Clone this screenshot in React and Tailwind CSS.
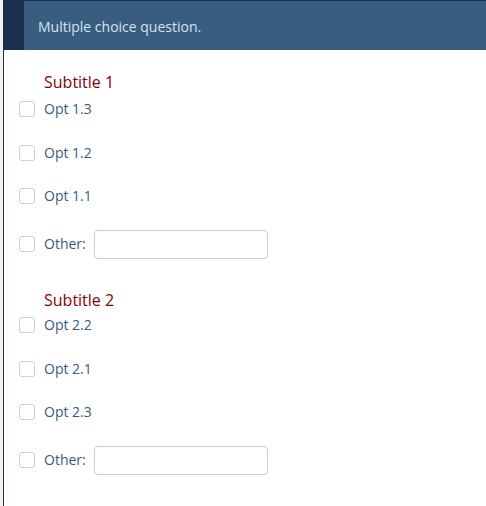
import React from "react";

function Box() {
  return <span className="block w-[16px] h-[16px] shrink-0 rounded-[3px] border border-[#cfcfcf] bg-white" />;
}

function Opt({ label, mt }) {
  return (
    <div className={`flex items-center h-[20px] ${mt}`}>
      <Box />
      <span className="ml-[9px] text-[14px] leading-[20px] text-[#365a80]">{label}</span>
    </div>
  );
}

function Other() {
  return (
    <div className="flex items-center h-[29px] mt-[23.5px]">
      <Box />
      <span className="ml-[9px] text-[14px] leading-[20px] text-[#365a80]">Other:</span>
      <input type="text" className="ml-[8px] w-[174px] h-[29px] rounded-[4px] border border-[#cccccc] bg-white outline-none" />
    </div>
  );
}

export default function App() {
  return (
    <div className="min-h-screen bg-[#f2f2f2] pl-[3px]" style={{ fontFamily: '"Open Sans", "Noto Sans", sans-serif' }}>
      <div className="min-h-screen bg-white border-l border-t border-[#1b2f4f]">
        <div className="flex h-[49px]">
          <div className="w-[20px] bg-[#1a2f50]" />
          <div className="flex-1 bg-[#385d80] flex items-center pl-[14px] pt-[1px] text-[14px] text-[#d6e2ee]">
            Multiple choice question.
          </div>
        </div>
        <div className="pl-[15px]">
          <div className="mt-[21px] pl-[25px] text-[16px] leading-[22px] text-[#860000]">Subtitle 1</div>
          <Opt label="Opt 1.3" mt="mt-[6px]" />
          <Opt label="Opt 1.2" mt="mt-[23.5px]" />
          <Opt label="Opt 1.1" mt="mt-[23.5px]" />
          <Other />
          <div className="mt-[30.5px] pl-[25px] text-[16px] leading-[22px] text-[#860000]">Subtitle 2</div>
          <Opt label="Opt 2.2" mt="mt-[4px]" />
          <Opt label="Opt 2.1" mt="mt-[23.5px]" />
          <Opt label="Opt 2.3" mt="mt-[23.5px]" />
          <Other />
        </div>
      </div>
    </div>
  );
}
